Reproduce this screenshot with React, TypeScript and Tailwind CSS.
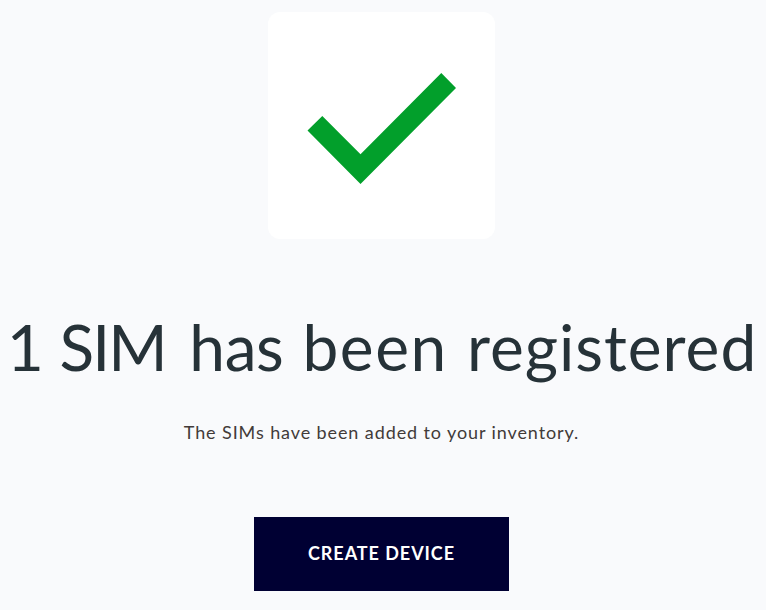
export default function App() {
  return (
    <main className="flex h-[610px] w-[766px] flex-col items-center overflow-hidden bg-[#f9fafc] pt-3 pr-[3px] font-['Lato','Liberation_Sans',sans-serif]">
      <div className="h-[227px] w-[227px] shrink-0 rounded-xl bg-white">
        <svg viewBox="0 0 227 227" className="h-full w-full" aria-hidden="true">
          <path d="M39.500 118.600 54.300 104 92.500 142.300 173.300 61 188 76 92.500 172Z" fill="#029f2b" />
        </svg>
      </div>
      <h1 className="mt-[66px] ml-px text-[64px] leading-[84px] tracking-[0.6px] [word-spacing:2px] whitespace-nowrap text-[#263238]">
        <span className="-mr-1">1</span>{" "}
        <span className="mr-[4.5px] tracking-[-1.9px]">SIM</span>{" "}
        <span className="tracking-[-0.4px]">has</span>{" "}
        <span className="tracking-[1.6px]">been</span>{" "}
        <span className="tracking-[1px]">registered</span>
      </h1>
      <p className="mt-[29px] text-[18px] leading-7 tracking-[0.9px] text-[#423b39]">
        The SIMs have been added to your inventory.
      </p>
      <button className="mt-[71px] h-[74px] w-[255px] shrink-0 bg-[#000033] pb-0.5 text-[18px] font-bold tracking-[0.95px] text-white">
        CREATE DEVICE
      </button>
    </main>
  );
}
